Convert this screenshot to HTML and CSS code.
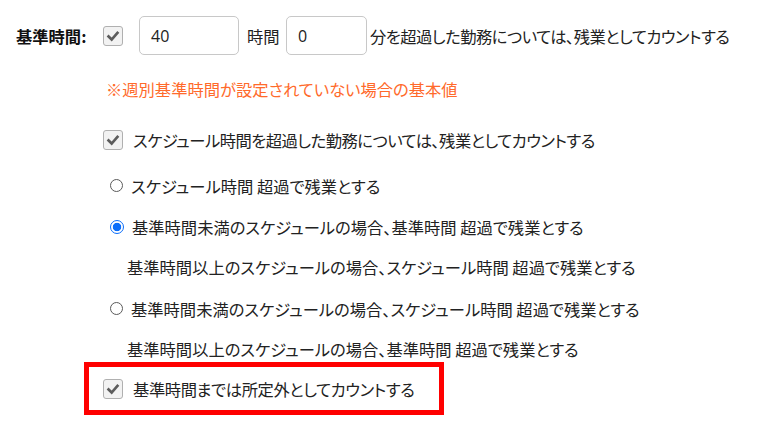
FILE: index.html
```html
<!DOCTYPE html>
<html lang="ja">
<head>
<meta charset="utf-8">
<link rel="stylesheet" href="styles.css">
</head>
<body>
<div class="page">
  <div class="row-main">
    <span class="label">基準時間:</span>
    <span class="cb cb-main"><svg viewBox="0 0 18 18"><path d="M4 9.5 L7.5 13 L14 5.5" fill="none" stroke="#5c5c5c" stroke-width="3" stroke-linecap="square"/></svg></span>
    <span class="input input-h">40</span>
    <span class="unit">時間</span>
    <span class="input input-m">0</span>
    <span class="tail tight">分を超過した勤務については、残業としてカウントする</span>
  </div>
  <div class="note">※週別基準時間が設定されていない場合の基本値</div>
  <div class="row-check">
    <span class="cb"><svg viewBox="0 0 18 18"><path d="M4 9.5 L7.5 13 L14 5.5" fill="none" stroke="#5c5c5c" stroke-width="3" stroke-linecap="square"/></svg></span>
    <span class="txt tight">スケジュール時間を超過した勤務については、残業としてカウントする</span>
  </div>
  <div class="radios">
    <div class="radio-row"><span class="radio"></span><span class="txt">スケジュール時間 超過で残業とする</span></div>
    <div class="radio-row"><span class="radio on"></span><span class="txt">基準時間未満のスケジュールの場合、基準時間 超過で残業とする</span></div>
    <div class="sub">基準時間以上のスケジュールの場合、スケジュール時間 超過で残業とする</div>
    <div class="radio-row"><span class="radio"></span><span class="txt">基準時間未満のスケジュールの場合、スケジュール時間 超過で残業とする</span></div>
    <div class="sub sub-last">基準時間以上のスケジュールの場合、基準時間 超過で残業とする</div>
  </div>
  <div class="highlight">
    <span class="cb"><svg viewBox="0 0 18 18"><path d="M4 9.5 L7.5 13 L14 5.5" fill="none" stroke="#5c5c5c" stroke-width="3" stroke-linecap="square"/></svg></span>
    <span class="txt tight-s">基準時間までは所定外としてカウントする</span>
  </div>
</div>
</body>
</html>
```
FILE: styles.css
```css
html, body {
  margin: 0;
  padding: 0;
  background: #fff;
}
body {
  font-family: "Noto Sans CJK JP", "Noto Sans", sans-serif;
  font-size: 16.3px;
  color: #222;
  font-feature-settings: "palt";
}
.page {
  width: 758px;
  height: 435px;
  overflow: hidden;
}
.row-main {
  display: flex;
  align-items: center;
  padding: 16px 0 0 16px;
  height: 39px;
}
.label {
  font-weight: bold;
  width: 76px;
  margin-right: 11px;
  color: #111;
}
.cb {
  display: inline-flex;
  align-items: center;
  justify-content: center;
  width: 18px;
  height: 18px;
  border: 1px solid #b0b0b0;
  border-radius: 3px;
  background: #f2f2f2;
  box-sizing: content-box;
  flex: none;
}
.cb svg { width: 16px; height: 16px; }
.cb-main { margin-right: 16px; }
.input {
  display: flex;
  align-items: center;
  box-sizing: border-box;
  height: 39px;
  border: 1px solid #c8c8c8;
  border-radius: 5px;
  padding-left: 11px;
  font-family: "Open Sans", "Noto Sans", sans-serif;
  font-size: 16px;
  color: #222;
}
.input-h { width: 100px; margin-right: 8px; }
.input-m { width: 81px; margin-left: 5px; margin-right: 3px; }
.unit { width: 34px; }
.tight { letter-spacing: -0.5px; }
.tight-s { letter-spacing: -0.4px; }
.note {
  color: #ff6a2b;
  margin: 22px 0 0 106px;
  height: 24px;
  line-height: 24px;
}
.row-check {
  display: flex;
  align-items: center;
  margin: 27px 0 0 103px;
  height: 24px;
}
.row-check .txt { margin-left: 10px; }
.radios {
  margin-top: 13px;
  padding-left: 110px;
}
.radio-row {
  display: flex;
  align-items: center;
  height: 41px;
}
.radio {
  width: 11px;
  height: 11px;
  border: 1px solid #5a5a5a;
  border-radius: 50%;
  flex: none;
  box-sizing: content-box;
}
.radio.on {
  width: 12px;
  height: 12px;
  border: 1px solid #0a6dfa;
  background: radial-gradient(circle, #0a6dfa 0 3.8px, #fff 4.6px);
}
.radio-row .txt { margin-left: 8px; }
.sub {
  height: 41px;
  line-height: 41px;
  margin-left: 17px;
}
.sub-last {
  height: 33px;
}
.highlight {
  display: flex;
  align-items: center;
  box-sizing: border-box;
  width: 360px;
  height: 53px;
  margin: 0 0 0 84px;
  border: 5px solid #ff0000;
  padding-left: 14px;
}
.highlight .txt { margin-left: 10px; }
```
